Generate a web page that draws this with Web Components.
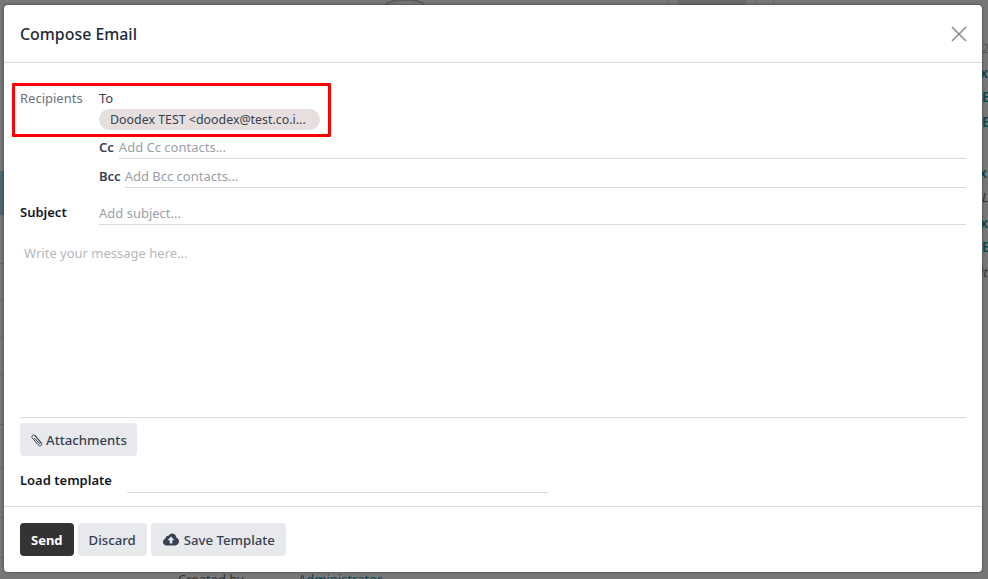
<!DOCTYPE html>
<html lang="en">
<head>
<meta charset="utf-8">
<title>Compose Email</title>
<style>
html, body { margin: 0; height: 100%; }
body { font-family: "Noto Sans", "Open Sans", sans-serif; font-size: 13px; color: #374151; overflow: hidden; }
</style>
</head>
<body>
<page-backdrop>
	<compose-dialog heading="Compose Email">
		<field-row label="Recipients" muted class="recipients">
			<div style="line-height:20px">To</div>
			<tag-chip>Doodex TEST &lt;doodex@test.co.i...</tag-chip>
		</field-row>
		<contact-input label="Cc" placeholder="Add Cc contacts..."></contact-input>
		<contact-input label="Bcc" placeholder="Add Bcc contacts..."></contact-input>
		<field-row label="Subject" class="subject">
			<line-input placeholder="Add subject..."></line-input>
		</field-row>
		<message-area placeholder="Write your message here..."></message-area>
		<action-button icon="clip" style="margin-top:5px">Attachments</action-button>
		<template-picker label="Load template"></template-picker>
		<action-button slot="footer" primary>Send</action-button>
		<action-button slot="footer">Discard</action-button>
		<action-button slot="footer" icon="cloud">Save Template</action-button>
	</compose-dialog>
	<note-box></note-box>
</page-backdrop>

<script>
const icons = {
	clip: '<svg width="12" height="14" viewBox="0 0 12 14" fill="none" stroke="currentColor" stroke-width="1"><path d="M3.800 2 10 9.300c1 1.200 1 2.500.1 3.200-.9.700-2 .5-3-.7L1.400 5.100C.7 4.200.7 3.100 1.500 2.400c.8-.6 1.700-.5 2.400.3l5.300 6.300c.4.500.4 1 0 1.300-.4.300-.9.200-1.300-.2L3.400 5"/></svg>',
	cloud: '<svg width="16" height="13" viewBox="0 0 16 13" fill="currentColor"><path fill-rule="evenodd" d="M3.600 12.500C1.600 12.500 0 11 0 9c0-1.500.9-2.800 2.300-3.300C2.500 3.900 4 2.600 5.700 2.800 6.500 1.200 8 .3 9.600.5c2 .2 3.500 1.800 3.600 3.900 1.600.5 2.800 2.100 2.800 3.900 0 2.300-1.800 4.200-4 4.200H3.600Zm4.400-9L4.500 7.200h2.200v3.300h2.600V7.200h2.200L8 3.500Z"/></svg>'
};

class PageBackdrop extends HTMLElement {
	constructor() {
		super();
		this.attachShadow({ mode: 'open' }).innerHTML = `
		<style>
			:host {
				display: flex;
				box-sizing: border-box;
				position: relative;
				width: 988px;
				height: 579px;
				padding: 5px 6px 7px 4px;
				background: #777;
				overflow: hidden;
			}
			.bit { position: absolute; white-space: nowrap; color: #333; }
			.link { color: #0a4550; font-weight: 600; font-size: 14px; }
			.band { position: absolute; left: 0; top: 171px; width: 4px; height: 44px; background: #4d6370; }
			.rule { position: absolute; left: 0; width: 4px; height: 1px; background: #666; }
			.vline { position: absolute; top: 0; width: 1px; height: 5px; background: #696969; }
			.top-arc { position: absolute; left: 385px; top: -1px; width: 40px; height: 12px; border: 2px solid #5c5c5c; border-radius: 50%; box-sizing: border-box; }
			.top-block { position: absolute; left: 678px; top: 0; width: 68px; height: 5px; background: #6a6a6a; }
		</style>
		<div class="top-arc"></div>
		<div class="top-block"></div>
		<div class="vline" style="left:667px"></div>
		<div class="vline" style="left:756px"></div>
		<div class="vline" style="left:773px"></div>
		<div class="band"></div>
		<div class="rule" style="top:263px"></div><div class="rule" style="top:300px"></div>
		<div class="rule" style="top:337px"></div><div class="rule" style="top:374px"></div>
		<div class="rule" style="top:424px"></div><div class="rule" style="top:468px"></div>
		<div class="rule" style="top:517px"></div><div class="rule" style="top:557px"></div>
		<div class="bit" style="left:982px;top:39px;color:#555">2</div>
		<div class="bit link" style="left:980px;top:63px">x</div>
		<div class="bit link" style="left:982px;top:87px">E</div>
		<div class="bit link" style="left:982px;top:112px">E</div>
		<div class="bit link" style="left:979px;top:163px">x</div>
		<div class="bit" style="left:982px;top:188px;font-style:italic">L</div>
		<div class="bit link" style="left:980px;top:213px">x</div>
		<div class="bit link" style="left:982px;top:237px">E</div>
		<div class="bit" style="left:980px;top:263px;font-style:italic">it</div>
		<div class="bit" style="left:178px;top:570px">Created by</div>
		<div class="bit link" style="left:298px;top:570px;font-weight:400;font-size:13px">Administrator</div>
		<slot></slot>`;
	}
}

class ComposeDialog extends HTMLElement {
	constructor() {
		super();
		this.attachShadow({ mode: 'open' }).innerHTML = `
		<style>
			:host {
				display: flex;
				flex-direction: column;
				flex: 1;
				position: relative;
				background: #fff;
				border-radius: 4px;
				box-shadow: 0 0 3px rgba(0,0,0,.5);
			}
			header {
				display: flex;
				align-items: center;
				justify-content: space-between;
				height: 57px;
				padding: 0 15px 0 16px;
				border-bottom: 1px solid #d8dadd;
			}
			h4 { margin: 0; font-size: 15.9px; font-weight: 500; color: #1f2937; }
			.close { display: flex; color: #8a8a8a; }
			main { flex: 1; display: flex; flex-direction: column; align-items: flex-start; padding: 25px 16px 0; }
			footer { display: flex; gap: 4px; height: 66px; box-sizing: border-box; padding: 16px 16px 0; border-top: 1px solid #d8dadd; }
		</style>
		<header>
			<h4></h4>
			<span class="close"><svg width="16" height="16" viewBox="0 0 16 16" stroke="currentColor" stroke-width="1.500"><path d="M1 1l14 14M15 1 1 15"/></svg></span>
		</header>
		<main><slot></slot></main>
		<footer><slot name="footer"></slot></footer>`;
		this.shadowRoot.querySelector('h4').textContent = this.getAttribute('heading');
	}
}

class FieldRow extends HTMLElement {
	constructor() {
		super();
		this.attachShadow({ mode: 'open' }).innerHTML = `
		<style>
			:host { display: flex; align-self: stretch; line-height: 20px; }
			:host(.subject) { margin-top: 13px; }
			.label { flex: 0 0 79px; font-weight: 600; color: #111827; }
			:host([muted]) .label { font-weight: 400; color: #6b7280; }
			.value { flex: 1; min-width: 0; }
		</style>
		<div class="label"></div>
		<div class="value"><slot></slot></div>`;
		this.shadowRoot.querySelector('.label').textContent = this.getAttribute('label');
	}
}

class TagChip extends HTMLElement {
	constructor() {
		super();
		this.attachShadow({ mode: 'open' }).innerHTML = `
		<style>
			:host {
				display: block;
				box-sizing: border-box;
				width: 221px;
				height: 21px;
				margin: 1px 0;
				padding: 0 11px;
				border-radius: 11px;
				background: #e6dfdd;
				color: #374151;
				font-size: 12.4px;
				line-height: 21px;
				white-space: nowrap;
				overflow: hidden;
			}
		</style><slot></slot>`;
	}
}

class LineInput extends HTMLElement {
	static get observedAttributes() { return ['placeholder']; }
	constructor() {
		super();
		this.attachShadow({ mode: 'open' }).innerHTML = `
		<style>
			:host { display: block; flex: 1; height: 22px; line-height: 22px; border-bottom: 1px solid #d8dadd; color: #9aa0a8; }
		</style><span></span>`;
	}
	attributeChangedCallback(name, old, value) {
		this.shadowRoot.querySelector('span').textContent = value;
	}
}

class ContactInput extends HTMLElement {
	constructor() {
		super();
		this.attachShadow({ mode: 'open' }).innerHTML = `
		<style>
			:host { display: flex; align-self: stretch; gap: 5px; margin-left: 79px; height: 29px; box-sizing: border-box; padding-top: 5px; line-height: 22px; }
			:host([label="Bcc"]) { gap: 4px; }
			b { font-weight: 600; color: #374151; }
		</style>
		<b></b><line-input></line-input>`;
		this.shadowRoot.querySelector('b').textContent = this.getAttribute('label');
		this.shadowRoot.querySelector('line-input').setAttribute('placeholder', this.getAttribute('placeholder'));
	}
}

class MessageArea extends HTMLElement {
	constructor() {
		super();
		this.attachShadow({ mode: 'open' }).innerHTML = `
		<style>
			:host { display: block; align-self: stretch; box-sizing: border-box; height: 193px; padding: 18px 4px 0; border-bottom: 1px solid #d8dadd; color: #b4b8bd; line-height: 20px; }
		</style><span></span>`;
		this.shadowRoot.querySelector('span').textContent = this.getAttribute('placeholder');
	}
}

class ActionButton extends HTMLElement {
	constructor() {
		super();
		const icon = icons[this.getAttribute('icon')] || '';
		this.attachShadow({ mode: 'open' }).innerHTML = `
		<style>
			:host {
				display: inline-flex;
				align-items: center;
				gap: 3px;
				box-sizing: border-box;
				height: 33px;
				padding: 0 11px;
				border-radius: 4px;
				background: #e7e9ed;
				color: #374151;
				font-size: 13.2px;
				font-weight: 500;
				white-space: nowrap;
			}
			:host([primary]) { background: #333; color: #fff; font-weight: 700; font-size: 13px; }
			:host([icon="clip"]) { padding: 0 10px 0 11px; }
			:host([icon="cloud"]) { gap: 5px; padding: 0 11px 0 12px; }
			svg { display: block; }
		</style>${icon}<slot></slot>`;
	}
}

class TemplatePicker extends HTMLElement {
	constructor() {
		super();
		this.attachShadow({ mode: 'open' }).innerHTML = `
		<style>
			:host { display: flex; align-self: stretch; align-items: flex-start; margin-top: 14px; line-height: 20px; }
			.label { width: 107px; font-weight: 600; color: #111827; }
			.line { width: 421px; height: 22px; border-bottom: 1px solid #d8dadd; }
		</style>
		<div class="label"></div><div class="line"></div>`;
		this.shadowRoot.querySelector('.label').textContent = this.getAttribute('label');
	}
}

// red annotation frame drawn on top of the screenshot
class NoteBox extends HTMLElement {
	constructor() {
		super();
		this.attachShadow({ mode: 'open' }).innerHTML = `
		<style>
			:host { position: absolute; z-index: 2; left: 12px; top: 83px; width: 319px; height: 54px; box-sizing: border-box; border: 3px solid #f00; border-radius: 1px; }
		</style>`;
	}
}

customElements.define('page-backdrop', PageBackdrop);
customElements.define('compose-dialog', ComposeDialog);
customElements.define('field-row', FieldRow);
customElements.define('tag-chip', TagChip);
customElements.define('line-input', LineInput);
customElements.define('contact-input', ContactInput);
customElements.define('message-area', MessageArea);
customElements.define('action-button', ActionButton);
customElements.define('template-picker', TemplatePicker);
customElements.define('note-box', NoteBox);
</script>
</body>
</html>
